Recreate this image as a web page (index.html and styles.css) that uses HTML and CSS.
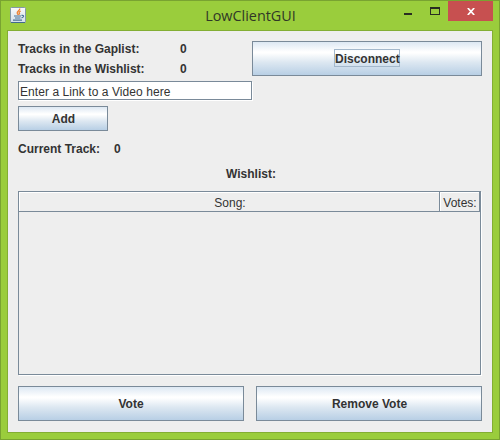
FILE: index.html
```html
<!DOCTYPE html>
<html lang="en">
<head>
<meta charset="utf-8">
<title>LowClientGUI</title>
<link rel="stylesheet" href="styles.css">
</head>
<body>
<div class="window">
  <header class="titlebar">
    <svg class="app-icon" width="16" height="16" viewBox="0 0 16 16">
      <defs><linearGradient id="tile" x1="0" y1="0" x2="0" y2="1"><stop offset="0" stop-color="#fafafa"/><stop offset="1" stop-color="#d3dfe9"/></linearGradient></defs>
      <rect x=".5" y=".5" width="15" height="15" rx="1" fill="url(#tile)" stroke="#8399a8"/>
      <path d="M1 15.5H15" stroke="#416b90"/>
      <path d="M9.8 1.5C10 4 6.3 4.3 7.3 6.4L8.3 8M10.8 4C8.7 4.8 8.8 5.6 9.5 6.5L8.8 7.7" fill="none" stroke="#ee8131" stroke-width="1.3"/>
      <path d="M4 9H11M5 11H10.5M3 13.2H12M11.5 8.4C14.5 7.8 14 10.3 11.5 10.8" fill="none" stroke="#487397" stroke-width="1.2"/>
    </svg>
    <h1 class="title">LowClientGUI</h1>
    <div class="controls">
      <svg class="minimize" width="8" height="2" viewBox="0 0 8 2"><path d="M0 0h8v2H0z" fill="#292d22"/></svg>
      <svg class="maximize" width="10" height="8" viewBox="0 0 10 8" shape-rendering="crispEdges"><path d="M0 0H10V8H0zM1 2V7H9V2z" fill="#292d22" fill-rule="evenodd"/></svg>
      <div class="close"><svg width="8" height="7" viewBox="0 0 8 7"><path d="M.8 0L7.2 7M7.2 0L.8 7" stroke="#fff" stroke-width="1.7"/></svg></div>
    </div>
  </header>
  <main class="panel">
    <section class="top">
      <div class="left">
        <div class="stat"><span>Tracks in the Gaplist:</span><span>0</span></div>
        <div class="stat"><span>Tracks in the Wishlist:</span><span>0</span></div>
        <div class="field">Enter a Link to a Video here</div>
        <div class="button add">Add</div>
      </div>
      <div class="button disconnect"><span class="focus">Disconnect</span></div>
    </section>
    <div class="current"><span>Current Track:</span><span>0</span></div>
    <h2 class="wishlist">Wishlist:</h2>
    <div class="table">
      <div class="head"><div class="song">Song:</div><div class="votes">Votes:</div></div>
    </div>
    <div class="actions"><div class="button">Vote</div><div class="button remove">Remove Vote</div></div>
  </main>
</div>
</body>
</html>
```
FILE: styles.css
```css
* { box-sizing: border-box; }
body { margin: 0; font: bold 12px/20px "Liberation Sans", Arial, sans-serif; color: #333; }
h1, h2 { margin: 0; font-size: inherit; }
.window { width: 500px; height: 440px; border: 1px solid #79a331; background: #9acd3c; padding: 0 6px 6px; }
.titlebar { height: 29px; display: grid; grid-template-columns: 110px 1fr 110px; }
.app-icon { margin: 6px 0 0 3px; }
.title { font: 14.4px/29px "Open Sans", sans-serif; text-align: center; color: #303727; padding-left: 1px; }
.controls { display: flex; align-items: flex-start; justify-content: flex-end; }
.minimize { margin: 12px 18px 0 0; flex: none; }
.maximize { margin: 6px 8px 0 0; flex: none; }
.close { width: 45px; height: 20px; flex: none; background: #c75050; display: flex; align-items: center; justify-content: center; padding-top: 1px; }
.panel { height: 403px; border: 1px solid #83ae33; background: #eee; padding: 10px; }
.top { display: flex; height: 90px; }
.left { width: 234px; }
.stat { display: flex; height: 20px; line-height: 16px; }
.stat span:first-child { width: 162px; white-space: nowrap; }
.field { width: 234px; height: 19px; padding: 1px 1px 1px 0; border: 1px solid #7a8a99; background: #fff; box-shadow: 1px 1px #fff; font-weight: normal; line-height: 18px; letter-spacing: .07px; text-indent: 1px; }
.button { display: flex; align-items: center; justify-content: center; border: 1px solid #7a8a99; background: linear-gradient(#dde8f3, #fff 30%, #fff 33%, #dce7f1 62%, #b8cfe5); }
.add { width: 90px; height: 25px; margin-top: 6px; padding-left: 1px; }
.disconnect { width: 230px; height: 35px; align-items: flex-start; padding-top: 7px; }
.focus { border: 1px solid #a3b8cc; height: 18px; line-height: 18px; width: 66px; text-align: center; white-space: nowrap; }
.current { display: flex; gap: 14px; height: 26px; line-height: 36px; }
.wishlist { height: 34px; text-align: center; line-height: 34px; padding-left: 2px; }
.table { height: 184px; width: 463px; border: 1px solid #7a8a99; box-shadow: 1px 1px #fff; }
.head { height: 20px; display: flex; font-weight: normal; line-height: 22px; text-align: center; }
.song, .votes { border: solid #7a8a99; border-width: 0 1px 1px 0; box-shadow: inset 1px 1px #fff; }
.song { width: 421px; padding-left: 2px; }
.votes { width: 40px; padding-left: 1px; }
.actions { margin-top: 11px; display: grid; grid-template-columns: 226px 226px; gap: 12px; height: 35px; }
.remove { padding-left: 1px; }
```
